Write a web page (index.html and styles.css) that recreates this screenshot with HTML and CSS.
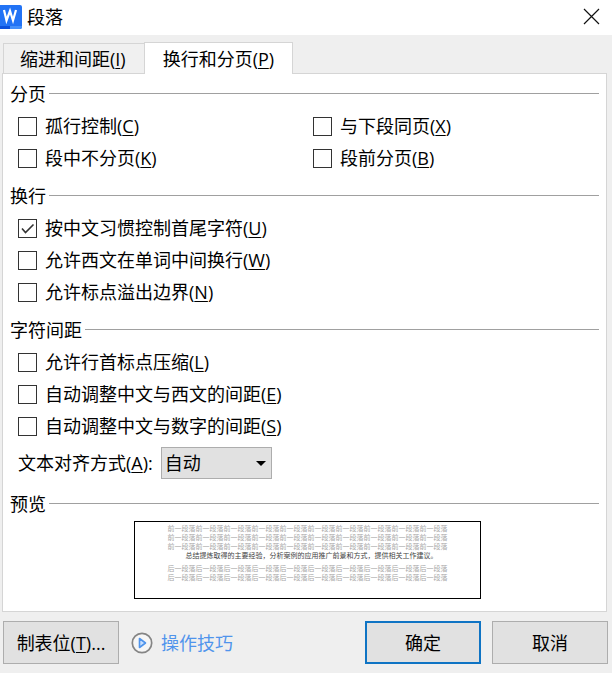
FILE: index.html
```html
<!DOCTYPE html>
<html lang="zh-CN">
<head>
    <meta charset="UTF-8">
    <meta name="viewport" content="width=device-width, initial-scale=1.0">
    <title>段落</title>
    <link rel="stylesheet" href="styles.css">
</head>
<body>

    <header class="titlebar">
        <svg class="logo" width="22" height="24" viewBox="0 0 22 24">
            <path d="M0 0H20Q22 0 22 2V22Q22 24 20 24H0Z" fill="#2273f5"/>
            <path d="M0 21H10V24H0Z" fill="#0b50dc"/>
            <path d="M10 21H22V22Q22 24 20 24H10Z" fill="#4590fa"/>
            <path d="M4 5L6.5 15.5L10 6L13 15.5L16 5" fill="none" stroke="#fff" stroke-width="2.2"/>
        </svg>
        <h1>段落</h1>
        <button class="close" aria-label="关闭">
            <svg width="17" height="17" viewBox="0 0 17 17">
                <path d="M1 1L16 16M16 1L1 16" stroke="#111" stroke-width="1.2"/>
            </svg>
        </button>
    </header>

    <nav class="tabs">
        <button class="tab">缩进和间距(<u>I</u>)</button>
        <button class="tab active">换行和分页(<u>P</u>)</button>
    </nav>

    <main class="panel">
        <section class="group">
            <h2>分页</h2>
            <div class="options two-columns">
                <label class="option"><input type="checkbox"><span>孤行控制(<u>C</u>)</span></label>
                <label class="option"><input type="checkbox"><span>与下段同页(<u>X</u>)</span></label>
                <label class="option"><input type="checkbox"><span>段中不分页(<u>K</u>)</span></label>
                <label class="option"><input type="checkbox"><span>段前分页(<u>B</u>)</span></label>
            </div>
        </section>

        <section class="group">
            <h2>换行</h2>
            <div class="options">
                <label class="option"><input type="checkbox" checked><span>按中文习惯控制首尾字符(<u>U</u>)</span></label>
                <label class="option"><input type="checkbox"><span>允许西文在单词中间换行(<u>W</u>)</span></label>
                <label class="option"><input type="checkbox"><span>允许标点溢出边界(<u>N</u>)</span></label>
            </div>
        </section>

        <section class="group">
            <h2>字符间距</h2>
            <div class="options">
                <label class="option"><input type="checkbox"><span>允许行首标点压缩(<u>L</u>)</span></label>
                <label class="option"><input type="checkbox"><span>自动调整中文与西文的间距(<u>E</u>)</span></label>
                <label class="option"><input type="checkbox"><span>自动调整中文与数字的间距(<u>S</u>)</span></label>
                <div class="align">
                    <label for="align">文本对齐方式(<u>A</u>):</label>
                    <div class="select">
                        <select id="align">
                            <option>自动</option>
                        </select>
                        <svg width="10" height="5" viewBox="0 0 10 5">
                            <path d="M0 0H10L5 5Z" fill="#000"/>
                        </svg>
                    </div>
                </div>
            </div>
        </section>

        <section class="group">
            <h2>预览</h2>
            <div class="preview-area">
                <div class="preview">
                    <div class="page">
                        <p>前一段落前一段落前一段落前一段落前一段落前一段落前一段落前一段落前一段落前一段落</p>
                        <p>前一段落前一段落前一段落前一段落前一段落前一段落前一段落前一段落前一段落前一段落</p>
                        <p>前一段落前一段落前一段落前一段落前一段落前一段落前一段落前一段落前一段落前一段落</p>
                        <p class="current">总结提炼取得的主要经验，分析案例的应用推广前景和方式，提供相关工作建议。</p>
                        <p>后一段落后一段落后一段落后一段落后一段落后一段落后一段落后一段落后一段落后一段落</p>
                        <p>后一段落后一段落后一段落后一段落后一段落后一段落后一段落后一段落后一段落后一段落</p>
                    </div>
                </div>
            </div>
        </section>
    </main>

    <footer class="footer">
        <button class="btn">制表位(<u>T</u>)...</button>
        <a class="tips" href="#">
            <svg width="22" height="22" viewBox="0 0 22 22">
                <circle cx="11" cy="11" r="9.7" fill="#f6f6f6" stroke="#858585" stroke-width="1.7"/>
                <path d="M8.5 6.5V15.5L14.5 11Z" fill="#c9e0ff" stroke="#4f94ec" stroke-width="1.6" stroke-linejoin="round"/>
            </svg>
            <span>操作技巧</span>
        </a>
        <button class="btn primary">确定</button>
        <button class="btn">取消</button>
    </footer>

</body>
</html>
```

FILE: styles.css
```css
*{
    box-sizing: border-box;
}

body{
    margin: 0;
    background-color: #efefef;
    color: #000;
    font-family: "Open Sans", "Noto Sans CJK SC", sans-serif;
    font-size: 18px;
    line-height: 24px;
}
h1, h2, p{
    margin: 0;
    font-size: 18px;
    font-weight: 400;
}
button, select{
    font: inherit;
    color: inherit;
    border-radius: 0;
}
u{
    text-decoration-thickness: 1px;
    text-underline-offset: 2px;
}

/* title bar */
.titlebar{
    display: flex;
    align-items: center;
    height: 35px;
    padding: 0 12px 2px 0;
    background-color: #fff;
}
.titlebar h1{
    flex: 1;
    padding-left: 5px;
}
.close{
    display: flex;
    padding: 0;
    border: none;
    background: none;
}

/* tabs */
.tabs{
    display: flex;
    align-items: flex-end;
    padding: 7px 3px 0;
}
.tab{
    height: 30px;
    padding: 0 18px 0 16px;
    border: 1px solid #d5d5d5;
    border-bottom: none;
    background-color: #f0f0f0;
}
.tab.active{
    z-index: 1;
    height: 32px;
    margin: 0 0 -1px -1px;
    padding: 0 18px;
    background-color: #fff;
}

/* panel */
.panel{
    margin: 0 5px 0 2px;
    padding: 8px 0 12px;
    border: 1px solid #d5d5d5;
    background-color: #fff;
}
.group + .group{
    margin-top: 10px;
}
.group h2{
    display: flex;
    align-items: center;
    gap: 3px;
    margin: 0 7px 4px;
}
.group h2::after{
    content: "";
    flex: 1;
    height: 2px;
    border-top: 1px solid #a0a0a0;
}
.options{
    display: grid;
    padding-left: 15px;
}
.two-columns{
    grid-template-columns: 1fr 1fr;
    column-gap: 2px;
}
.option{
    display: flex;
    align-items: center;
    gap: 8px;
    height: 32px;
}
.option input{
    appearance: none;
    width: 19px;
    height: 19px;
    margin: 0;
    border: 1px solid #333;
    background-color: #fff;
}
.option input:checked{
    background-image: url("data:image/svg+xml,%3Csvg xmlns='http://www.w3.org/2000/svg' viewBox='0 0 17 17'%3E%3Cpath d='M3 8.5L6.5 12.5L14.5 4.5' fill='none' stroke='%23333' stroke-width='1.6'/%3E%3C/svg%3E");
}

.align{
    display: flex;
    align-items: center;
    gap: 8px;
    padding: 5px 0 3px;
}
.select{
    position: relative;
}
.select select{
    appearance: none;
    display: block;
    width: 111px;
    height: 32px;
    padding: 0 3px;
    border: 1px solid #adadad;
    background-color: #e1e1e1;
}
.select svg{
    position: absolute;
    top: 14px;
    right: 6px;
    pointer-events: none;
}

/* preview */
.preview-area{
    padding: 1px 0 0 6px;
}
.preview{
    display: flex;
    justify-content: center;
    width: 347px;
    height: 78px;
    margin: 0 auto;
    padding-top: 2px;
    border: 1px solid #000;
}
.page p{
    color: #a8a8a8;
    font-family: "Noto Sans CJK SC", sans-serif;
    font-size: 7px;
    line-height: 9px;
    white-space: nowrap;
}
.page .current{
    margin-bottom: 4px;
    padding-left: 18px;
    color: #444;
}

/* footer */
.footer{
    display: flex;
    align-items: center;
    padding: 9px 4px 9px 3px;
}
.btn{
    width: 116px;
    height: 43px;
    padding: 0;
    border: 1px solid #adadad;
    background-color: #e1e1e1;
}
.primary{
    margin-right: 11px;
    border: 2px solid #0f74c4;
}
.tips{
    display: flex;
    align-items: center;
    gap: 8px;
    margin: 0 auto 0 12px;
    color: #4f94ec;
    text-decoration: none;
}
```
